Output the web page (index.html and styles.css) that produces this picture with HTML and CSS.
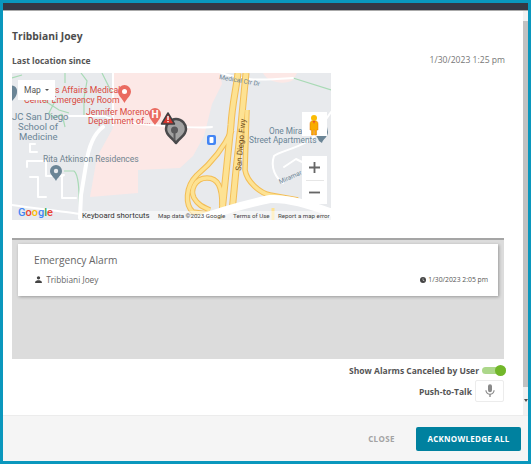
FILE: index.html
```html
<!DOCTYPE html>
<html lang="en">
<head>
  <meta charset="UTF-8">
  <meta name="viewport" content="width=device-width, initial-scale=1.0">
  <title>Alarm details</title>
  <link rel="stylesheet" href="styles.css">
</head>
<body>
  <div class="dialog">
    <div class="topbar"></div>

    <div class="content">
      <div class="main">
        <h1 class="person">Tribbiani Joey</h1>

        <div class="since">
          <span class="since-label">Last location since</span>
          <span class="since-time">1/30/2023 1:25 pm</span>
        </div>

        <div class="map">
          <svg class="map-art" viewBox="12 73 319 147" width="319" height="147">
            <rect x="12" y="73" width="319" height="147" fill="#e8eaed"/>
            <!-- hospital grounds -->
            <path d="M113 73H220L222 84L212 104L204 136L193 156L180 168L138 170V193L90 197L97 157L113 128Z" fill="#fce8e6"/>
            <path d="M263 73C268 83 285 85 293 80L297 73Z" fill="#fce8e6"/>

            <!-- paths -->
            <g fill="none" stroke="#a8dab5" stroke-width="1.2">
              <path d="M12 78L22 75M65 73V83M81 73L87 81L84 98V116M102 73L112 93"/>
              <path d="M45 101L59 110L69 113M55 101L49 113L54 118L62 114M62 114L65 127"/>
              <path d="M64 171H74C79 175 79 190 80 218"/>
              <path d="M293 78L331 90"/>
            </g>

            <!-- white roads -->
            <g fill="none" stroke="#fff" stroke-linecap="round" stroke-linejoin="round">
              <path d="M113 73V125M69 116H105C118 126 205 128 212 127" stroke-width="2"/>
              <path d="M103 127C92 135 88 150 86 165L81 195L80 218" stroke-width="4"/>
              <path d="M35 144H30V152H37M27 161H46V176H62L64 175M62 175V198H66M27 161V167M30 177H38V197H46M62 198H76" stroke-width="2"/>
              <path d="M12 205C40 209 70 212 80 214" stroke-width="2"/>
              <path d="M331 112L320 128C312 147 280 150 274 156C270 168 276 178 283 183" stroke-width="2"/>
              <path d="M284 167L296 159L304 163M219 72C245 82 265 80 293 78" stroke-width="2"/>
            </g>

            <!-- freeway -->
            <g fill="none" stroke="#f3bd55">
              <path d="M238 73C236 90 232 105 231 125L222 212" stroke-width="7"/>
              <path d="M246 73L241 125L236 170L232 212" stroke-width="7"/>
              <path d="M247 110L245 170C247 182 260 193 270 195L298 200" stroke-width="5.5"/>
              <path d="M232 130C225 145 215 160 197 175C185 187 185 205 193 212L222 216" stroke-width="5.5"/>
              <path d="M222 205C222 187 218 178 207 178C195 178 190 190 194 198C198 205 203 207 210 210" stroke-width="5.5"/>
            </g>
            <g fill="none" stroke="#fde293">
              <path d="M238 73C236 90 232 105 231 125L222 212" stroke-width="5"/>
              <path d="M246 73L241 125L236 170L232 212" stroke-width="5"/>
              <path d="M247 110L245 170C247 182 260 193 270 195L298 200" stroke-width="3.5"/>
              <path d="M232 130C225 145 215 160 197 175C185 187 185 205 193 212L222 216" stroke-width="3.5"/>
              <path d="M222 205C222 187 218 178 207 178C195 178 190 190 194 198C198 205 203 207 210 210" stroke-width="3.5"/>
            </g>
            <path d="M190 222C215 213 245 204 270 199C290 198 312 206 333 213" fill="none" stroke="#fff" stroke-width="8"/>
            <path d="M273 208V220" fill="none" stroke="#fde293" stroke-width="3"/>

            <!-- labels -->
            <g class="map-red">
              <text x="55" y="93">s Affairs Medical</text>
              <text x="24" y="102.5">Center Emergency Room</text>
              <text x="86" y="115">Jennifer Moreno</text>
              <text x="88" y="124">Department of...</text>
            </g>
            <g class="map-slate">
              <text x="12" y="120" class="map-lg">JC San Diego</text>
              <text x="18" y="130" class="map-lg">School of</text>
              <text x="19" y="140" class="map-lg">Medicine</text>
              <text x="43" y="162" class="map-sm">Rita Atkinson Residences</text>
              <text x="269" y="134" class="map-md">One Mira</text>
              <text x="249" y="143" class="map-md">Street Apartments</text>
              <text x="0" y="0" class="map-xs" transform="translate(280 184) rotate(-24)">Miramar</text>
              <text x="0" y="0" class="map-xs" transform="translate(219 79) rotate(10)">Medical Ctr Dr</text>
            </g>
            <text x="0" y="0" class="map-road" transform="translate(241 171) rotate(-85)">San Diego Fwy</text>

            <!-- pins -->
            <path d="M124.500 85a6.500 6.500 0 0 1 6.500 6.500c0 4.500-4.500 7-6.500 11.500c-2-4.500-6.500-7-6.500-11.500a6.500 6.500 0 0 1 6.500-6.500Z" fill="#ea6b61"/>
            <circle cx="124.500" cy="91.500" r="2.500" fill="#fff"/>
            <path d="M155 108a6 6 0 0 1 6 6c0 4-3 7-6 11c-3-4-6-7-6-11a6 6 0 0 1 6-6Z" fill="#ea6b61"/>
            <text x="151.5" y="118" class="map-h">H</text>
            <path d="M56 165a6 6 0 0 1 6 6c0 4-4 6-6 10c-2-4-6-6-6-10a6 6 0 0 1 6-6Z" fill="#6b8596"/>
            <circle cx="56" cy="171" r="2.200" fill="#e8eaed"/>
            <path d="M14 86a4 4 0 0 0-2-.5V101c2-2 5-5 5-9a6 6 0 0 0-3-6Z" fill="#6b8596"/>
            <path d="M327 127a7 7 0 0 0-12 5c0 3 3 6 4 9l3 2c1-4 6-6 6-11Z" fill="#6b8596"/>
            <rect x="207" y="135" width="9" height="10" rx="2" fill="#4285f4"/>
            <rect x="209.5" y="137" width="4" height="6" rx="1" fill="#fff"/>

            <!-- user marker -->
            <path d="M176 119c6 0 10 5 10 10c0 7-6 8-10 14c-4-6-10-7-10-14c0-5 4-10 10-10Z" fill="#a2a2a2" stroke="#4a4a4c" stroke-width="2.5" stroke-linejoin="round"/>
            <circle cx="174.5" cy="130" r="3.5" fill="#5a5a5c"/>
            <path d="M173.5 132h2v8h-2Z" fill="#5a5a5c"/>
            <path d="M168 113l6.500 11h-13Z" fill="#d3362d" stroke="#3f3f41" stroke-width="1.5" stroke-linejoin="round"/>
            <path d="M167.300 116h1.400v4h-1.400ZM167.300 121h1.400v1.300h-1.400Z" fill="#fff"/>

            <!-- attribution -->
            <rect x="79" y="211" width="252" height="9" fill="#fff" fill-opacity=".5"/>
            <text x="82" y="217.5" class="map-attr-lg">Keyboard shortcuts</text>
            <text x="158" y="217.5" class="map-attr">Map data ©2023 Google</text>
            <text x="233" y="217.5" class="map-attr">Terms of Use</text>
            <text x="278" y="217.5" class="map-attr">Report a map error</text>
            <text x="18" y="215.5" class="map-google"><tspan fill="#4285f4">G</tspan><tspan fill="#ea4335">o</tspan><tspan fill="#fbbc05">o</tspan><tspan fill="#4285f4">g</tspan><tspan fill="#34a853">l</tspan><tspan fill="#ea4335">e</tspan></text>
          </svg>

          <div class="map-type">Map <span class="caret"></span></div>

          <div class="pegman">
            <svg viewBox="0 0 24 24" width="24" height="24">
              <circle cx="12" cy="6" r="3" fill="#fbbc04"/>
              <path d="M8 12c0-2 1-3 2-3h4c1 0 2 1 2 3v6h-1.500v5h-2v-5h-1v5h-2v-5H8Z" fill="#f9ab00" stroke="#e37400" stroke-width=".5"/>
              <path d="M11 9h2l-1 3Z" fill="#ea4335"/>
            </svg>
          </div>

          <div class="zoom-box">
            <button class="zoom-btn">
              <svg viewBox="0 0 12 12" width="11" height="11"><path d="M5 0h2v5h5v2H7v5H5V7H0V5h5Z" fill="#666"/></svg>
            </button>
            <span class="zoom-sep"></span>
            <button class="zoom-btn">
              <svg viewBox="0 0 12 12" width="11" height="11"><path d="M0 5h12v2H0Z" fill="#666"/></svg>
            </button>
          </div>
        </div>

        <div class="alarms">
          <div class="alarm-card">
            <div class="alarm-title">Emergency Alarm</div>
            <div class="alarm-meta">
              <span class="alarm-user">
                <svg viewBox="0 0 24 24" width="9" height="9"><path d="M12 12a4.500 4.500 0 1 0 0-9 4.500 4.500 0 0 0 0 9Zm0 2c-3.300 0-9 1.700-9 5v2h18v-2c0-3.300-5.700-5-9-5Z" fill="#444"/></svg>
                Tribbiani Joey
              </span>
              <span class="alarm-time">
                <svg viewBox="0 0 24 24" width="6" height="6"><circle cx="12" cy="12" r="12" fill="#444"/><path d="M11 5h2v7l5 3-1 1.700-6-3.700Z" fill="#fff"/></svg>
                1/30/2023 2:05 pm
              </span>
            </div>
          </div>
        </div>

        <div class="option-row">
          <span class="option-label">Show Alarms Canceled by User</span>
          <span class="toggle"><span class="toggle-knob"></span></span>
        </div>

        <div class="option-row ptt-row">
          <span class="option-label">Push-to-Talk</span>
          <button class="mic-btn">
            <svg viewBox="0 0 24 24" width="16" height="16"><path d="M12 14a3 3 0 0 0 3-3V5a3 3 0 0 0-6 0v6a3 3 0 0 0 3 3Zm5.300-3c0 3-2.500 5.100-5.300 5.100S6.700 14 6.700 11H5c0 3.400 2.700 6.200 6 6.700V21h2v-3.300c3.300-.5 6-3.300 6-6.700Z" fill="#8a8a8a"/></svg>
          </button>
        </div>
      </div>

      <div class="scrollbar">
        <span class="scroll-arrow up"></span>
        <span class="scroll-thumb"></span>
        <span class="scroll-arrow down"></span>
      </div>
    </div>

    <div class="footer">
      <button class="btn-close">CLOSE</button>
      <button class="btn-ack">ACKNOWLEDGE ALL</button>
    </div>
  </div>
</body>
</html>
```

FILE: styles.css
```css
html, body {
  margin: 0;
  height: 100%;
}

body {
  background: #fff;
  font-family: "Open Sans", sans-serif;
  color: #4a4a4a;
}

.dialog {
  box-sizing: border-box;
  width: 531px;
  height: 464px;
  border: 3px solid #0a97bd;
  display: flex;
  flex-direction: column;
  background: #fff;
  overflow: hidden;
}

.topbar {
  height: 7px;
  background: #363844;
  border-bottom: 1px solid #aaa;
}

.content {
  flex: 1;
  display: flex;
  min-height: 0;
}

.main {
  flex: 1;
  padding: 17px 0 0 9px;
  min-width: 0;
}

.person {
  margin: 0;
  font-size: 10.3px;
  line-height: 16px;
  font-weight: 700;
  color: #4d4d4d;
}

.since {
  display: flex;
  justify-content: space-between;
  align-items: center;
  margin-top: 8px;
  height: 16px;
  width: 493px;
}

.since-label {
  font-size: 8.5px;
  font-weight: 700;
  color: #555;
}

.since-time {
  font-size: 8.6px;
  color: #777;
}

.map {
  position: relative;
  width: 319px;
  height: 147px;
  margin-top: 5px;
  overflow: hidden;
}

.map-art {
  display: block;
}

.map-art text {
  font-family: "Roboto", sans-serif;
}

.map-red text {
  font-size: 8.7px;
  fill: #d9493f;
}

.map-slate text {
  fill: #6b8596;
}

.map-slate .map-lg {
  font-size: 9.5px;
}

.map-slate .map-md {
  font-size: 8.3px;
}

.map-slate .map-sm {
  font-size: 8.5px;
  fill: #70848f;
}

.map-slate .map-xs {
  font-size: 6.5px;
}

.map-art .map-road {
  font-size: 8px;
  fill: #6d4c1c;
}

.map-art .map-h {
  font-size: 10px;
  font-weight: 700;
  fill: #fff;
}

.map-art .map-attr-lg {
  font-size: 7.8px;
  fill: #333;
}

.map-art .map-attr {
  font-size: 6.2px;
  fill: #444;
}

.map-art .map-google {
  font-size: 11px;
  font-weight: 500;
}

/* map controls sit on top of the map */
.map-type {
  position: absolute;
  left: 6px;
  top: 7px;
  width: 37px;
  height: 20px;
  background: #fff;
  display: flex;
  align-items: center;
  justify-content: center;
  gap: 4px;
  font-family: "Roboto", sans-serif;
  font-size: 8.5px;
  color: #555;
}

.caret {
  border-left: 2.5px solid transparent;
  border-right: 2.5px solid transparent;
  border-top: 2.5px solid #555;
}

.pegman {
  position: absolute;
  left: 290px;
  top: 39px;
  width: 25px;
  height: 24px;
  background: #fff;
}

.zoom-box {
  position: absolute;
  left: 290px;
  top: 83px;
  width: 25px;
  height: 48px;
  background: #fff;
  display: flex;
  flex-direction: column;
  align-items: center;
}

.zoom-btn {
  flex: 1;
  border: 0;
  padding: 0;
  background: none;
  display: flex;
  align-items: center;
  justify-content: center;
}

.zoom-sep {
  width: 18px;
  height: 1px;
  background: #e6e6e6;
}

.alarms {
  box-sizing: border-box;
  width: 492px;
  height: 121px;
  margin-top: 18px;
  padding: 4px 6px;
  background: #dcdcdc;
  border-top: 2px solid #a5a5a5;
}

.alarm-card {
  box-sizing: border-box;
  height: 52px;
  padding: 9px 10px 0 16px;
  background: #fff;
  box-shadow: 1px 1px 3px rgba(0, 0, 0, .3);
}

.alarm-title {
  font-size: 10.2px;
  line-height: 15px;
  color: #666;
}

.alarm-meta {
  display: flex;
  justify-content: space-between;
  align-items: center;
  margin-top: 4px;
  height: 14px;
  font-size: 8.3px;
  color: #666;
}

.alarm-user svg,
.alarm-time svg {
  vertical-align: -1px;
  margin-right: 1px;
}

.alarm-time {
  font-size: 6.8px;
  color: #555;
}

.option-row {
  display: flex;
  justify-content: flex-end;
  align-items: center;
  gap: 3px;
  width: 494px;
  height: 14px;
  margin-top: 4px;
}

.option-label {
  font-size: 8.5px;
  font-weight: 700;
  color: #555;
}

.toggle {
  position: relative;
  width: 24px;
  height: 7px;
  border-radius: 4px;
  background: #acd78a;
}

.toggle-knob {
  position: absolute;
  right: 0;
  top: -2px;
  width: 11px;
  height: 11px;
  border-radius: 50%;
  background: #72b72a;
}

.ptt-row {
  width: 492px;
  height: 22px;
  margin-top: 3px;
}

.mic-btn {
  box-sizing: border-box;
  width: 29px;
  height: 22px;
  padding: 0;
  border: 1px solid #ececec;
  border-radius: 2px;
  background: #fff;
  display: flex;
  align-items: center;
  justify-content: center;
}

.scrollbar {
  flex: none;
  width: 5px;
  background: #f1f1f1;
  display: flex;
  flex-direction: column;
  align-items: center;
}

.scroll-thumb {
  flex: none;
  width: 100%;
  height: 366px;
  background: #c1c1c1;
}

.scroll-arrow {
  flex: none;
}

.scroll-arrow.up {
  height: 10px;
}

.scroll-arrow.down {
  margin-top: 12px;
  border-left: 2px solid transparent;
  border-right: 2px solid transparent;
  border-top: 3px solid #505050;
}

.footer {
  flex: none;
  height: 46px;
  box-sizing: border-box;
  background: #f5f5f5;
  border-top: 1px solid #ececec;
  display: flex;
  justify-content: flex-end;
  align-items: center;
  gap: 21px;
  padding-right: 7px;
}

.btn-close {
  border: 0;
  padding: 0;
  background: none;
  font-family: inherit;
  font-size: 8px;
  font-weight: 700;
  letter-spacing: .4px;
  color: #a3a3a3;
}

.btn-ack {
  width: 105px;
  height: 24px;
  border: 0;
  border-radius: 2px;
  padding: 0;
  background: #00819f;
  font-family: inherit;
  font-size: 8px;
  font-weight: 700;
  letter-spacing: .25px;
  color: #fff;
}
```
